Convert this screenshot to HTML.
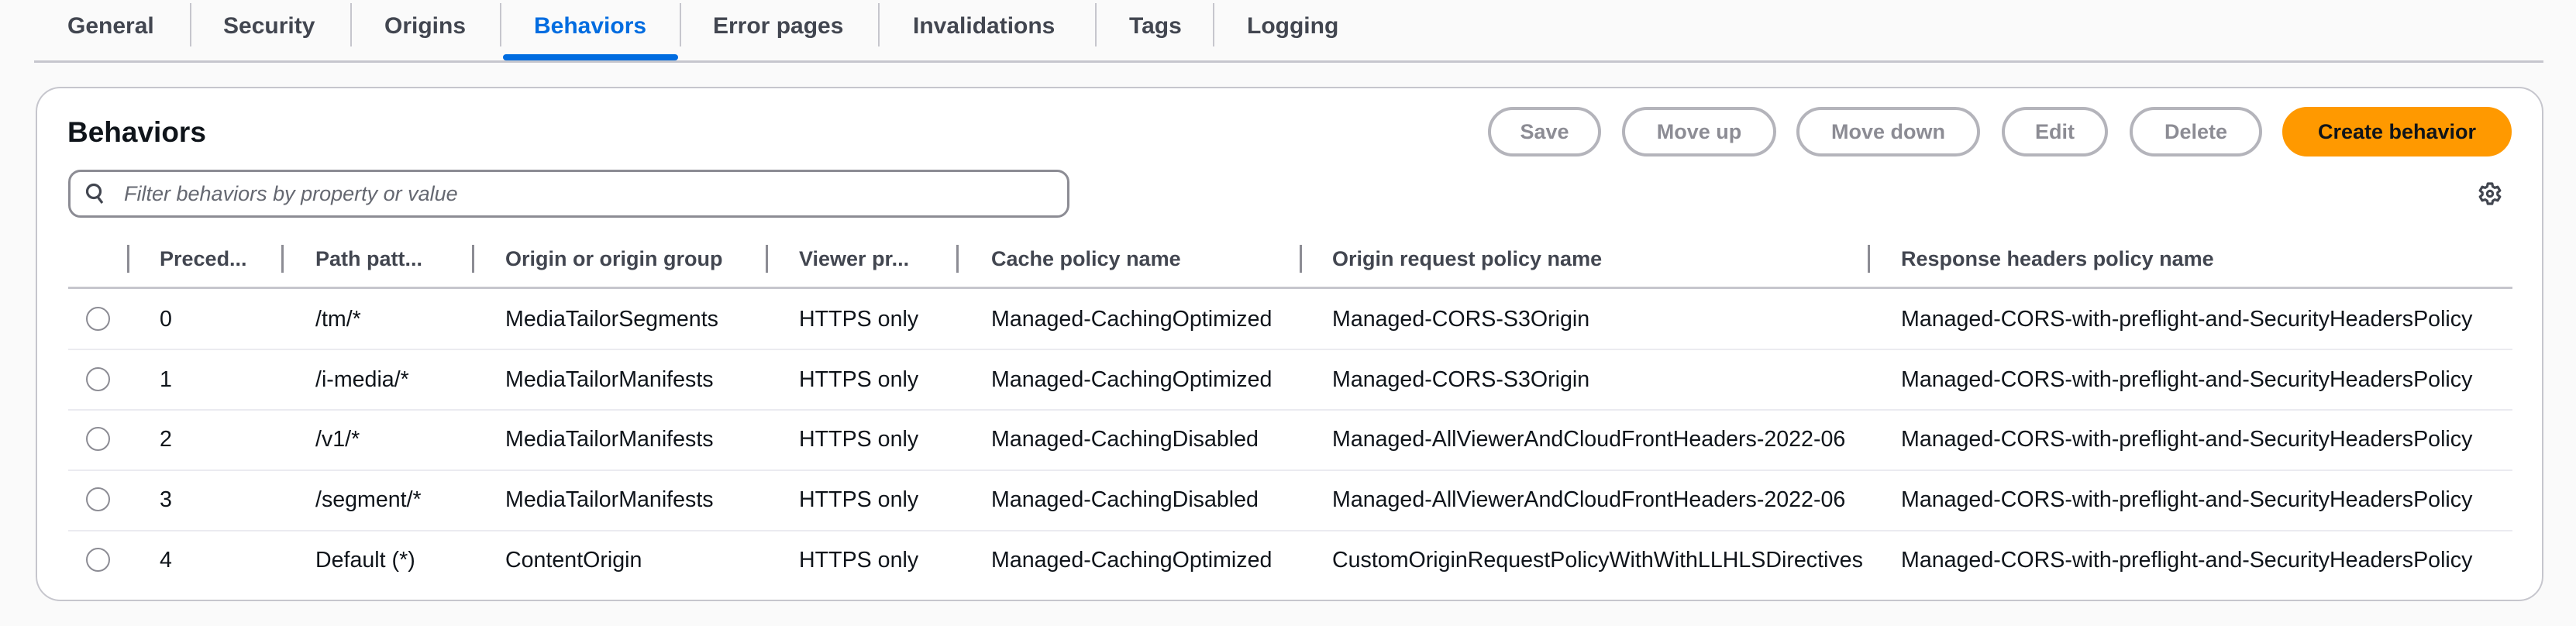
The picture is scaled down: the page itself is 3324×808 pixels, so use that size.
<!DOCTYPE html>
<html><head><meta charset="utf-8"><style>
*{margin:0;padding:0;box-sizing:border-box}
body{width:3324px;height:808px;background:#fafafa;font-family:"Liberation Sans",sans-serif;position:relative;overflow:hidden;color:#0f141a}
.a{position:absolute;white-space:nowrap}
.tab{position:absolute;top:14px;font-size:30px;font-weight:bold;color:#424650;line-height:40px}
.tdiv{position:absolute;top:4px;width:2px;height:56px;background:#c6c6cd}
.panel{position:absolute;left:46px;top:112px;width:3236px;height:664px;background:#fff;border:2px solid #c6c6cd;border-radius:32px}
.btn{position:absolute;top:138px;height:64px;border:4px solid #b4b4bb;border-radius:32px;color:#8c8c94;font-size:27px;font-weight:bold;text-align:center;line-height:56px}
.th{position:absolute;top:316px;font-size:27px;font-weight:bold;color:#424650;line-height:36px}
.hd{position:absolute;top:316px;width:3px;height:36px;background:#8c8c94}
.td{position:absolute;font-size:28.6px;color:#0f141a;line-height:34px}
.hr{position:absolute;left:88px;width:3154px;height:2px;background:#ebebf0}
.rad{position:absolute;left:111px;width:31px;height:31px;border:2px solid #8c8c94;border-radius:50%}
</style></head><body>
<div class="tab" style="left:87px">General</div>
<div class="tdiv" style="left:245px"></div>
<div class="tab" style="left:288px">Security</div>
<div class="tdiv" style="left:452px"></div>
<div class="tab" style="left:496px">Origins</div>
<div class="tdiv" style="left:645px"></div>
<div class="tab" style="left:689px;color:#006ce0">Behaviors</div>
<div class="tdiv" style="left:877px"></div>
<div class="tab" style="left:920px">Error pages</div>
<div class="tdiv" style="left:1133px"></div>
<div class="tab" style="left:1178px">Invalidations</div>
<div class="tdiv" style="left:1413px"></div>
<div class="tab" style="left:1457px">Tags</div>
<div class="tdiv" style="left:1565px"></div>
<div class="tab" style="left:1609px">Logging</div>
<div class="a" style="left:44px;top:78px;width:3238px;height:3px;background:#c6c6cd"></div>
<div class="a" style="left:649px;top:70px;width:226px;height:8px;background:#006ce0;border-radius:4px"></div>

<div class="panel"></div>
<div class="a" style="left:87px;top:148px;font-size:37px;font-weight:bold;line-height:46px">Behaviors</div>
<div class="btn" style="left:1920px;width:146px">Save</div>
<div class="btn" style="left:2093px;width:199px">Move up</div>
<div class="btn" style="left:2318px;width:237px">Move down</div>
<div class="btn" style="left:2583px;width:137px">Edit</div>
<div class="btn" style="left:2748px;width:171px">Delete</div>
<div class="btn" style="left:2945px;width:296px;background:#ff9900;border-color:#ff9900;color:#0f141a">Create behavior</div>
<svg class="a" style="left:3197px;top:234px" width="32" height="32" viewBox="0 0 16 16" fill="none" stroke="#424650" stroke-width="1.6" stroke-linejoin="round"><path d="M6.6 1.5h2.8l.4 1.9 1.3.8 1.9-.6 1.4 2.4-1.5 1.3v1.4l1.5 1.3-1.4 2.4-1.9-.6-1.3.8-.4 1.9H6.6l-.4-1.9-1.3-.8-1.9.6-1.4-2.4 1.5-1.3V7.3L1.6 6l1.4-2.4 1.9.6 1.3-.8z"/><circle cx="8" cy="8" r="1.8"/></svg>

<div class="a" style="left:88px;top:219px;width:1292px;height:62px;border:3px solid #8c8c94;border-radius:16px"></div>
<svg class="a" style="left:110px;top:235px" width="26" height="30" viewBox="0 0 26 30" fill="none" stroke="#424650" stroke-width="3.2"><circle cx="11" cy="12" r="8.5"/><path d="M16 19l6 8"/></svg>
<div class="a" style="left:160px;top:232px;font-size:27px;font-style:italic;color:#656871;line-height:36px">Filter behaviors by property or value</div>

<div class="hd" style="left:164px"></div>
<div class="th" style="left:206px">Preced...</div>
<div class="hd" style="left:363px"></div>
<div class="th" style="left:407px">Path patt...</div>
<div class="hd" style="left:609px"></div>
<div class="th" style="left:652px">Origin or origin group</div>
<div class="hd" style="left:988px"></div>
<div class="th" style="left:1031px">Viewer pr...</div>
<div class="hd" style="left:1234px"></div>
<div class="th" style="left:1279px">Cache policy name</div>
<div class="hd" style="left:1677px"></div>
<div class="th" style="left:1719px">Origin request policy name</div>
<div class="hd" style="left:2410px"></div>
<div class="th" style="left:2453px">Response headers policy name</div>
<div class="a" style="left:88px;top:370px;width:3154px;height:3px;background:#c6c6cd"></div>

<div class="hr" style="top:450px"></div>
<div class="hr" style="top:528px"></div>
<div class="hr" style="top:606px"></div>
<div class="hr" style="top:684px"></div>

<div class="rad" style="top:396px"></div>
<div class="td" style="top:395px;left:206px">0</div><div class="td" style="top:395px;left:407px">/tm/*</div><div class="td" style="top:395px;left:652px">MediaTailorSegments</div><div class="td" style="top:395px;left:1031px">HTTPS only</div><div class="td" style="top:395px;left:1279px">Managed-CachingOptimized</div><div class="td" style="top:395px;left:1719px">Managed-CORS-S3Origin</div><div class="td" style="top:395px;left:2453px">Managed-CORS-with-preflight-and-SecurityHeadersPolicy</div>

<div class="rad" style="top:474px"></div>
<div class="td" style="top:473px;left:206px">1</div><div class="td" style="top:473px;left:407px">/i-media/*</div><div class="td" style="top:473px;left:652px">MediaTailorManifests</div><div class="td" style="top:473px;left:1031px">HTTPS only</div><div class="td" style="top:473px;left:1279px">Managed-CachingOptimized</div><div class="td" style="top:473px;left:1719px">Managed-CORS-S3Origin</div><div class="td" style="top:473px;left:2453px">Managed-CORS-with-preflight-and-SecurityHeadersPolicy</div>

<div class="rad" style="top:551px"></div>
<div class="td" style="top:550px;left:206px">2</div><div class="td" style="top:550px;left:407px">/v1/*</div><div class="td" style="top:550px;left:652px">MediaTailorManifests</div><div class="td" style="top:550px;left:1031px">HTTPS only</div><div class="td" style="top:550px;left:1279px">Managed-CachingDisabled</div><div class="td" style="top:550px;left:1719px">Managed-AllViewerAndCloudFrontHeaders-2022-06</div><div class="td" style="top:550px;left:2453px">Managed-CORS-with-preflight-and-SecurityHeadersPolicy</div>

<div class="rad" style="top:629px"></div>
<div class="td" style="top:628px;left:206px">3</div><div class="td" style="top:628px;left:407px">/segment/*</div><div class="td" style="top:628px;left:652px">MediaTailorManifests</div><div class="td" style="top:628px;left:1031px">HTTPS only</div><div class="td" style="top:628px;left:1279px">Managed-CachingDisabled</div><div class="td" style="top:628px;left:1719px">Managed-AllViewerAndCloudFrontHeaders-2022-06</div><div class="td" style="top:628px;left:2453px">Managed-CORS-with-preflight-and-SecurityHeadersPolicy</div>

<div class="rad" style="top:707px"></div>
<div class="td" style="top:706px;left:206px">4</div><div class="td" style="top:706px;left:407px">Default (*)</div><div class="td" style="top:706px;left:652px">ContentOrigin</div><div class="td" style="top:706px;left:1031px">HTTPS only</div><div class="td" style="top:706px;left:1279px">Managed-CachingOptimized</div><div class="td" style="top:706px;left:1719px">CustomOriginRequestPolicyWithWithLLHLSDirectives</div><div class="td" style="top:706px;left:2453px">Managed-CORS-with-preflight-and-SecurityHeadersPolicy</div>
</body></html>
